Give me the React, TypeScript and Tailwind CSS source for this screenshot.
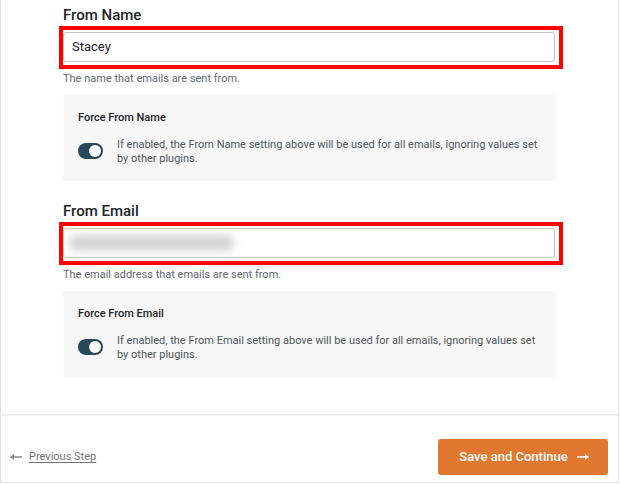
import React from 'react';

const font = { fontFamily: 'Roboto, "Noto Sans", sans-serif' };

const Toggle: React.FC = () => (
  <span className="mt-[5px] flex h-[16px] w-[25px] shrink-0 items-center justify-end rounded-full bg-[#26495c] pr-[2px]">
    <span className="h-[12px] w-[12px] rounded-full bg-white" />
  </span>
);

const ForceBox: React.FC<{ title: string; text: string }> = ({ title, text }) => (
  <div className="mt-2 bg-[#f7f7f7] px-[15px] pb-[15px] pt-[15px]">
    <div className="text-[11px] font-medium leading-4 text-[#1d2327]">{title}</div>
    <div className="mt-3 flex gap-[14px]">
      <Toggle />
      <p className="text-[11px] leading-[14px] text-[#50575e]">{text}</p>
    </div>
  </div>
);

const Field: React.FC<{
  label: string;
  help: string;
  first?: boolean;
  children: React.ReactNode;
}> = ({ label, help, first, children }) => (
  <div className={first ? 'pt-[5px]' : 'pt-[20px]'}>
    <label className="block text-[15px] font-medium leading-5 text-[#1d2327]">{label}</label>
    <div className="ml-[-4px] mt-[1px] w-[504px] border-4 border-[#ff0000] pb-[3px] pr-1 pt-[2px]">
      <div className="flex h-[30px] w-[492px] items-center rounded-[3px] border border-[#c3c4c7] bg-white px-2 text-[13px] text-[#1d2327]">
        {children}
      </div>
    </div>
    <p className="mt-[2px] text-[11px] leading-4 text-[#646970]">{help}</p>
  </div>
);

// thin shaft with a small solid head
const Arrow: React.FC<{ left?: boolean; className?: string }> = ({ left, className }) => (
  <svg width="12" height="8" viewBox="0 0 12 8" className={className} fill="currentColor">
    {left ? (
      <>
        <rect x="3" y="3.25" width="9" height="1.5" />
        <path d="M0 4 L4 1 L4 7 Z" />
      </>
    ) : (
      <>
        <rect x="0" y="3.25" width="9" height="1.5" />
        <path d="M12 4 L8 1 L8 7 Z" />
      </>
    )}
  </svg>
);

export default function App() {
  return (
    <div className="h-[484px] w-[620px] overflow-hidden bg-white" style={font}>
      <div className="flex h-[483px] w-[619px] flex-col border-x border-b border-[#e2e2e2]">
        <div className="px-[62px]">
          <Field label="From Name" help="The name that emails are sent from." first>
            Stacey
          </Field>
          <ForceBox
            title="Force From Name"
            text="If enabled, the From Name setting above will be used for all emails, ignoring values set by other plugins."
          />
          <Field label="From Email" help="The email address that emails are sent from.">
            <span className="ml-[-3px] h-[16px] w-[165px] rounded-full bg-[#d4d4d4] blur-[4px]" />
          </Field>
          <ForceBox
            title="Force From Email"
            text="If enabled, the From Email setting above will be used for all emails, ignoring values set by other plugins."
          />
        </div>

        <div className="mt-auto border-t-2 border-[#eeeeee] pb-[7px] pl-[9px] pr-[10px] pt-[23px]">
          <div className="flex items-center justify-between">
            <a className="flex items-center gap-[7px] text-[11px] text-[#757575] underline underline-offset-2">
              <Arrow left className="text-[#8a8a8a]" />
              Previous Step
            </a>
            <button className="flex h-[36px] w-[170px] items-center justify-center gap-[9px] rounded-[3px] bg-[#e27730] pl-[2px] text-[13px] font-medium text-white">
              Save and Continue
              <Arrow />
            </button>
          </div>
        </div>
      </div>
    </div>
  );
}
